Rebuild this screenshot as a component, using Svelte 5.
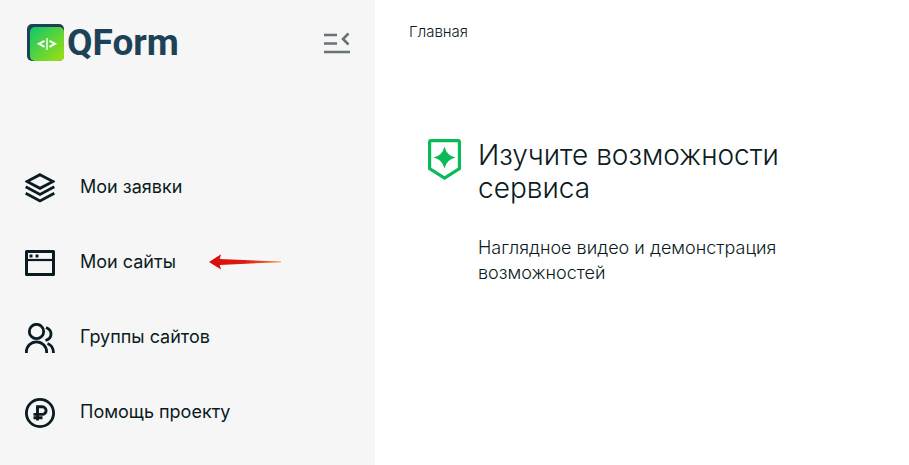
<script>
  const items = [
    { icon: 'layers', label: 'Мои заявки' },
    { icon: 'window', label: 'Мои сайты', marked: true },
    { icon: 'users', label: 'Группы сайтов' },
    { icon: 'ruble', label: 'Помощь проекту' },
  ];

  let collapsed = $state(false);
</script>

<div class="page">
  <aside class:collapsed>
    <header>
      <a class="logo" href="#home">
        <svg width="38" height="39" viewBox="0 0 38 39" aria-hidden="true">
          <defs>
            <linearGradient id="logo-fill" x1="0" y1="0" x2="1" y2="1">
              <stop offset="0" stop-color="#10c76c" />
              <stop offset="1" stop-color="#a0e00c" />
            </linearGradient>
          </defs>
          <rect width="37" height="37" rx="5" fill="#1d4257" />
          <rect x="3" y="3" width="34" height="34" rx="5" fill="url(#logo-fill)" />
          <g fill="none" stroke="#fff">
            <path d="M17.500 16.800l-5.500 3 5.500 3M22.500 16.800l5.500 3-5.500 3" stroke-width="2" />
            <path d="M20 14v12" stroke-width="1.4" />
          </g>
        </svg>
        <span>QForm</span>
      </a>
      <button aria-label="Свернуть меню" onclick={() => (collapsed = !collapsed)}>
        <svg width="26" height="22" viewBox="0 0 26 22" fill="none" stroke="#697376" stroke-width="2.6">
          <path d="M0 3h13M0 11.5h13M0 20h26" />
          <path d="M24.5 1.5L19 7l5.500 5.500" />
        </svg>
      </button>
    </header>

    <nav>
      {#each items as item}
        <a href="#{item.icon}">
          <svg width="30" height="30" viewBox="0 0 30 30" fill="none" stroke="currentColor" stroke-width="2.8" aria-hidden="true">
            {#if item.icon === 'layers'}
              <path d="M15 1.700L28 8.500 15 15.300 2 8.500z" />
              <path d="M.7 13.800L15 21.500l14.300-7.700M.7 20.300L15 28l14.300-7.700" />
            {:else if item.icon === 'window'}
              <rect x="1.500" y="3.500" width="27" height="23" stroke-width="3" stroke-linejoin="round" />
              <path d="M2 12h26" stroke-width="2.200" />
              <path d="M4.500 6.500h3v3h-3zM10.500 6.500h3v3h-3z" fill="currentColor" stroke="none" />
            {:else if item.icon === 'users'}
              <circle cx="11.500" cy="8.500" r="7.200" />
              <path d="M1.400 30v-1a10 10 0 0 1 20.200 0v1" />
              <path d="M21 4.500c7 3 6.500 11-.5 13" />
              <path d="M22.500 20.500c4 1.500 6 5 6 9.500" />
            {:else}
              <circle cx="15" cy="15" r="13.600" />
              <path d="M12.500 22.500V8.800h4.800a3.800 3.800 0 0 1 0 7.600H8.500M8.500 19.800h9" stroke-width="2.900" />
            {/if}
          </svg>
          <span>{item.label}</span>
          {#if item.marked}
            <svg class="arrow" width="73" height="18" viewBox="0 0 76 18" aria-hidden="true">
              <defs>
                <linearGradient id="arrow-fill">
                  <stop offset="0" stop-color="#d80c0c" />
                  <stop offset=".5" stop-color="#dd1c10" />
                  <stop offset="1" stop-color="#f58235" />
                </linearGradient>
              </defs>
              <path d="M0 8L12.500 0l-1.300 4.800L75 7.500v.6L11.200 11l1.300 4.800z" fill="url(#arrow-fill)" />
            </svg>
          {/if}
        </a>
      {/each}
    </nav>
  </aside>

  <main>
    <a class="crumb" href="#home">Главная</a>
    <section>
      <svg width="33" height="41" viewBox="0 0 33 41" aria-hidden="true">
        <path d="M3 1.600h27q1.400 0 1.400 1.400v26.600L16.500 39 1.600 29.600V3q0-1.400 1.400-1.400z" fill="none" stroke="#0aba59" stroke-width="3.200" />
        <path d="M16.500 7.500Q18.500 16.500 27.500 18.500 18.500 20.500 16.500 29.500 14.500 20.500 5.500 18.500 14.500 16.500 16.500 7.500z" fill="#0aba59" />
      </svg>
      <div>
        <h1>Изучите возможности сервиса</h1>
        <p>Наглядное видео и демонстрация возможностей</p>
      </div>
    </section>
  </main>
</div>

<style>
  :global(body) {
    margin: 0;
    background: #fff;
  }
  .page {
    display: flex;
    min-height: 100vh;
    color: #0a1b22;
    font-family: Inter, sans-serif;
  }
  a {
    color: inherit;
    text-decoration: none;
  }
  svg {
    display: block;
    flex: none;
  }

  aside {
    flex: 0 0 375px;
    background: #f6f6f6;
  }
  header {
    display: flex;
    align-items: center;
    justify-content: space-between;
    padding: 20px 25px 20px 27px;
  }
  .logo {
    display: flex;
    align-items: center;
    gap: 2px;
    color: #1d4257;
    font: 700 37px/46px Roboto, sans-serif;
  }
  button {
    padding: 0;
    background: none;
    border: none;
    cursor: pointer;
  }

  nav {
    padding-top: 64px;
  }
  nav a {
    display: flex;
    align-items: center;
    height: 75px;
    padding-left: 25px;
    font-size: 18px;
  }
  nav span {
    margin-left: 25px;
    padding-bottom: 2px;
  }
  nav .arrow {
    margin-left: 33px;
  }
  .collapsed {
    flex-basis: 80px;
    overflow: hidden;
  }
  .collapsed span,
  .collapsed .arrow {
    display: none;
  }

  main {
    flex: 1;
    padding: 21px 34px;
  }
  .crumb {
    font-size: 15px;
    font-weight: 300;
    line-height: 20px;
  }
  section {
    display: flex;
    align-items: flex-start;
    gap: 17px;
    max-width: 380px;
    padding: 97px 0 0 19px;
  }
  h1 {
    margin: 0;
    font-size: 28px;
    font-weight: 300;
    line-height: 33px;
  }
  p {
    margin: 30px 0 0;
    font-size: 18px;
    font-weight: 300;
    line-height: 25px;
  }
</style>
